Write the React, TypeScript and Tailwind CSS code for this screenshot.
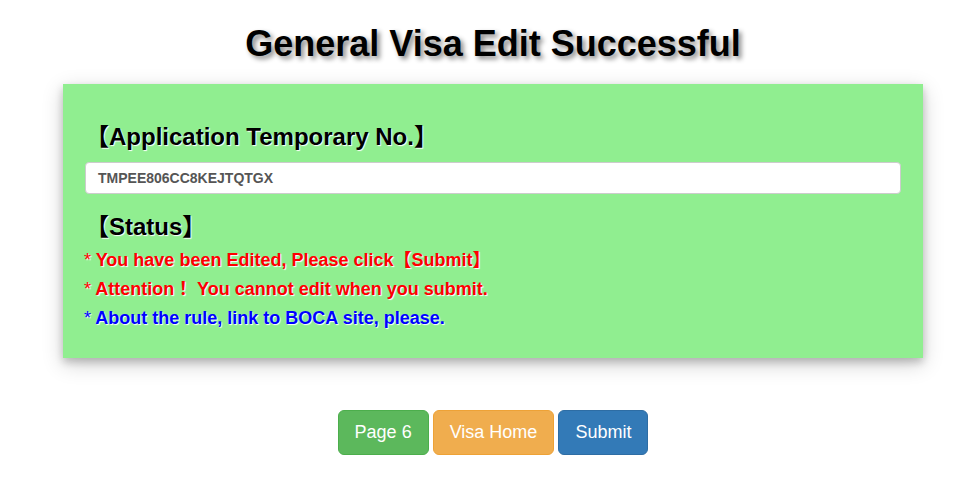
import React from "react";

function Star() {
  return <span className="font-normal">*</span>;
}

export default function App() {
  return (
    <div className="min-h-screen bg-white pl-[15px] flex flex-col items-center font-['Liberation_Sans','Noto_Sans_CJK_TC',sans-serif] text-black">
      <h1 className="mt-[24px] text-[36px] leading-[40px] font-bold text-black [text-shadow:3px_3px_5px_#888]">
        General Visa Edit Successful
      </h1>
      <div className="mt-[20px] w-[860px] bg-[#90ee90] px-[22px] pt-[40px] pb-[25px] shadow-[0_4px_8px_0_rgba(0,0,0,0.2),0_6px_20px_0_rgba(0,0,0,0.19)]">
        <h3 className="text-[24px] leading-[26px] font-bold [text-shadow:1px_1px_1px_#fff]">
          【Application Temporary No.】
        </h3>
        <div className="mt-[12px] h-[32px] rounded-[4px] border border-[#ccc] bg-white px-[12px] flex items-center text-[14px] font-bold text-[#555]">
          TMPEE806CC8KEJTQTGX
        </div>
        <h3 className="mt-[20px] text-[24px] leading-[26px] font-bold [text-shadow:1px_1px_1px_#fff]">
          【Status】
        </h3>
        <div className="mt-[6px] -ml-[1px] text-[18px] leading-[29px] font-bold [text-shadow:1px_1px_1px_#fff]">
          <div className="text-[#ff0000]">
            <Star /> You have been Edited, Please click【Submit】
          </div>
          <div className="text-[#ff0000]">
            <Star /> Attention！ You cannot edit when you submit.
          </div>
          <div className="text-[#0000ff]">
            <Star /> About the rule, link to BOCA site, please.
          </div>
        </div>
      </div>
      <div className="mt-[52px] flex gap-[4px]">
        <button className="px-[16px] py-[10px] text-[18px] leading-[23px] text-white bg-[#5cb85c] border border-[#4cae4c] rounded-[6px]">
          Page 6
        </button>
        <button className="px-[16px] py-[10px] text-[18px] leading-[23px] text-white bg-[#f0ad4e] border border-[#eea236] rounded-[6px]">
          Visa Home
        </button>
        <button className="px-[16px] py-[10px] text-[18px] leading-[23px] text-white bg-[#337ab7] border border-[#2e6da4] rounded-[6px]">
          Submit
        </button>
      </div>
    </div>
  );
}
